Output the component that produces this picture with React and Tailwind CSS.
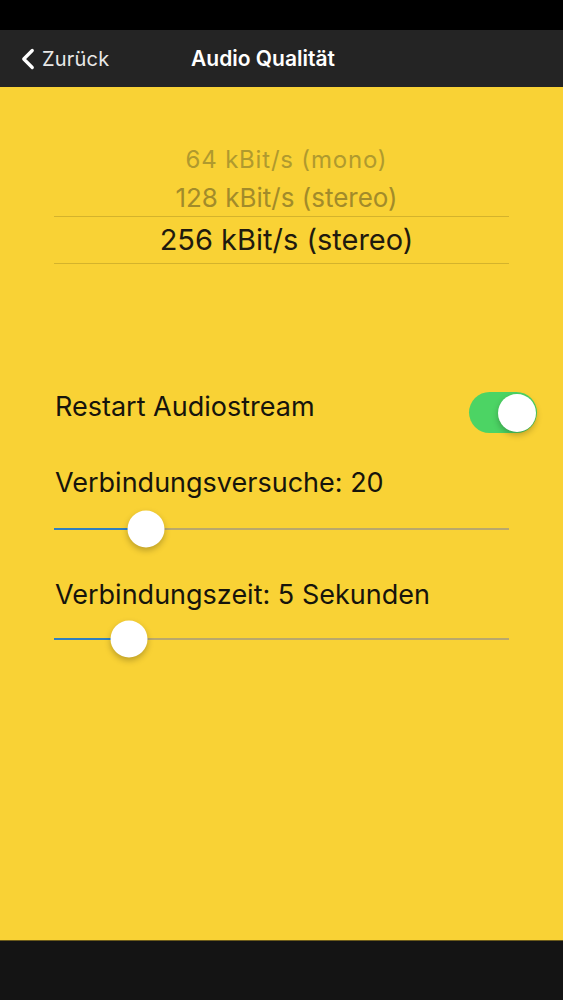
import { ChevronLeft } from "lucide-react";

const font = { fontFamily: 'Inter, "Liberation Sans", Arial, sans-serif' };

// slider track runs x 54..508, thumb given as px from track start
function Slider({ at }) {
  return (
    <div className="relative mx-[54px] h-[40px]">
      <div className="absolute left-0 right-0 top-1/2 h-[2px] -translate-y-1/2 bg-[#b9a86c]" />
      <div
        className="absolute left-0 top-1/2 h-[2px] -translate-y-1/2 bg-[#2f7fbf]"
        style={{ width: at }}
      />
      <div
        className="absolute top-1/2 h-[37px] w-[37px] -translate-x-1/2 -translate-y-1/2 rounded-full bg-white shadow-[0_3px_6px_rgba(0,0,0,0.25)]"
        style={{ left: at }}
      />
    </div>
  );
}

export default function App() {
  return (
    <div className="flex h-[1000px] w-[563px] flex-col bg-[#f9d235]" style={font}>
      <div className="h-[30px] bg-black" />
      <div className="flex h-[57px] items-center bg-[#242424] text-white">
        <div className="flex w-[191px] items-center pl-[11px]">
          <ChevronLeft size={34} strokeWidth={2.3} className="-mr-[3px]" />
          <span className="text-[20px] tracking-[0.2px] text-[#e8e8e8]">Zurück</span>
        </div>
        <span className="text-[21px] font-semibold">Audio Qualität</span>
      </div>

      <div className="flex-1">
        <div className="mx-[54px] mt-[59px] flex flex-col items-center">
          <div className="h-[28px] pl-[10px] text-[24px] leading-[28px] tracking-[0.8px] text-[#b09a2e]">64 kBit/s (mono)</div>
          <div className="h-[42px] pl-[10px] pt-[8px] text-[26px] leading-[32px] text-[#a28b2a]">128 kBit/s (stereo)</div>
          <div className="w-full border-y border-[#d4b32c] py-[6px] pl-[10px] text-center text-[29px] leading-[34px] text-[#1f1a0e]">
            256 kBit/s (stereo)
          </div>
        </div>

        <div className="mt-[128px] flex items-start justify-between pl-[55px] pr-[26px]">
          <span className="mt-[1px] text-[27px] leading-[28px] text-[#16140c]">Restart Audiostream</span>
          <div className="relative h-[41px] w-[68px] rounded-full bg-[#4cd464]">
            <div className="absolute right-[1px] top-[2px] h-[38px] w-[38px] rounded-full bg-white shadow-[0_3px_6px_rgba(0,0,0,0.25)]" />
          </div>
        </div>

        <div className="mt-[34px] pl-[55px] text-[27px] leading-[32px] text-[#16140c]">Verbindungsversuche: 20</div>
        <div className="mt-[10px]">
          <Slider at={92} />
        </div>

        <div className="mt-[30px] pl-[55px] text-[27px] leading-[32px] text-[#16140c]">Verbindungszeit: 5 Sekunden</div>
        <div className="mt-[8px]">
          <Slider at={75} />
        </div>
      </div>

      <div className="h-[60px] border-t border-[#6b5a1a] bg-[#141414]" />
    </div>
  );
}
